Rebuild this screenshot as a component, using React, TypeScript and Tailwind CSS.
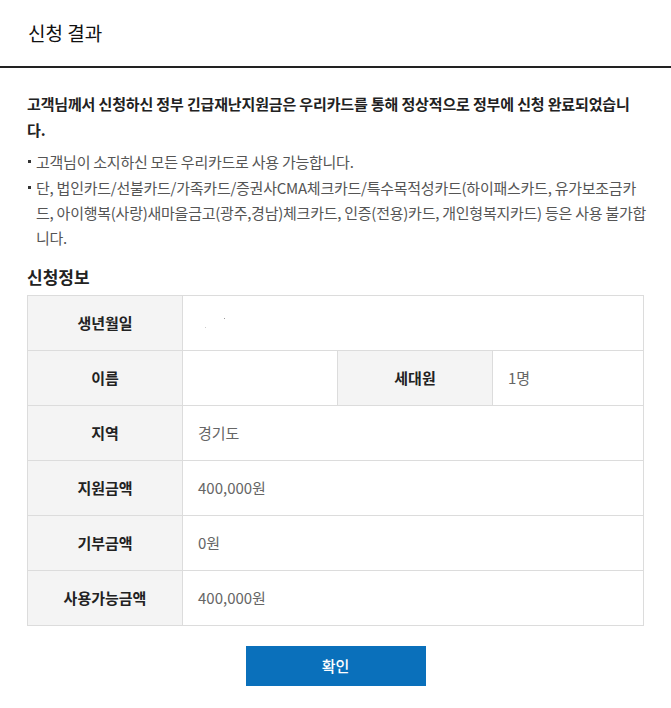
const font = { fontFamily: '"Noto Sans CJK KR", "Noto Sans", sans-serif' };

const rows: { label: string; value: React.ReactNode; extra?: { label: string; value: string } }[] = [
  {
    label: "생년월일",
    // masked value: only a couple of faint specks remain
    value: (
      <span className="relative block w-[40px] h-[20px]">
        <span className="absolute left-[7px] top-[14px] w-px h-px bg-[#ccc]"></span>
        <span className="absolute left-[26px] top-[5px] w-px h-px bg-[#999]"></span>
      </span>
    ),
  },
  { label: "이름", value: "", extra: { label: "세대원", value: "1명" } },
  { label: "지역", value: "경기도" },
  { label: "지원금액", value: "400,000원" },
  { label: "기부금액", value: "0원" },
  { label: "사용가능금액", value: "400,000원" },
];

function Label({ children }: { children: React.ReactNode }) {
  return (
    <div className="h-[55px] flex items-center justify-center bg-[#f4f4f4] border-r border-b border-[#dcdcdc] text-[15px] font-bold text-[#222]">
      {children}
    </div>
  );
}

function Value({ children, wide }: { children: React.ReactNode; wide?: boolean }) {
  return (
    <div
      className={`h-[55px] flex items-center pl-[15px] border-r border-b border-[#dcdcdc] text-[15px] text-[#666] ${
        wide ? "col-span-3" : ""
      }`}
    >
      {children}
    </div>
  );
}

export default function App() {
  return (
    <div className="w-full min-h-screen bg-white" style={font}>
      {/* Header */}
      <header className="h-[68px] px-[28px] flex items-center border-b-2 border-[#222]">
        <h1 className="text-[19px] text-[#111]">신청 결과</h1>
      </header>

      <main className="px-[27px] pt-[23px] pb-[20px]">
        <p className="text-[15px] font-bold leading-[26px] text-[#222] tracking-[-0.15px]">
          고객님께서 신청하신 정부 긴급재난지원금은 우리카드를 통해 정상적으로 정부에 신청 완료되었습니다.
        </p>

        <ul className="mt-[6px] -mr-[5px] space-y-px text-[15px] leading-[25px] text-[#555] tracking-[-0.25px]">
          <li className="relative pl-[9px]">
            <span className="absolute left-px top-[11px] w-[3px] h-[3px] bg-[#333]"></span>
            고객님이 소지하신 모든 우리카드로 사용 가능합니다.
          </li>
          <li className="relative pl-[9px]">
            <span className="absolute left-px top-[11px] w-[3px] h-[3px] bg-[#333]"></span>
            단, 법인카드/선불카드/가족카드/증권사CMA체크카드/특수목적성카드(하이패스카드, 유가보조금카드, 아이행복(사랑)새마을금고(광주,경남)체크카드, 인증(전용)카드, 개인형복지카드) 등은 사용 불가합니다.
          </li>
        </ul>

        <h2 className="mt-[16px] mb-[7px] text-[17px] font-bold leading-[22px] text-[#222]">신청정보</h2>

        <div className="grid grid-cols-[155px_155px_155px_1fr] border-t border-l border-[#dcdcdc]">
          {rows.map((r) =>
            r.extra ? (
              <div key={r.label} className="contents">
                <Label>{r.label}</Label>
                <Value>{r.value}</Value>
                <Label>{r.extra.label}</Label>
                <Value>{r.extra.value}</Value>
              </div>
            ) : (
              <div key={r.label} className="contents">
                <Label>{r.label}</Label>
                <Value wide>{r.value}</Value>
              </div>
            )
          )}
        </div>

        <div className="mt-[20px] flex justify-center">
          <button className="w-[180px] h-[40px] bg-[#0a70bb] text-white text-[15px] font-medium">
            확인
          </button>
        </div>
      </main>
    </div>
  );
}
